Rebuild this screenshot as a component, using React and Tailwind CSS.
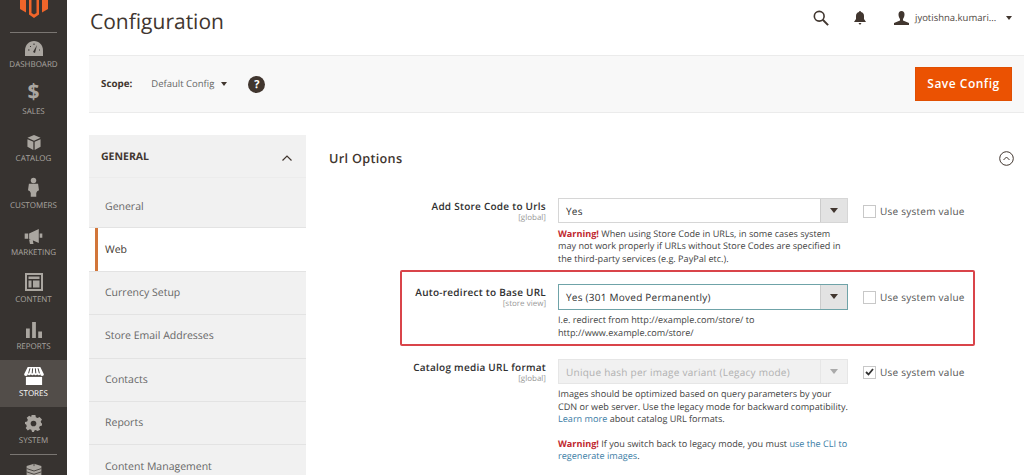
import React from 'react';

const Logo = () => (
  <svg width="28" height="18" viewBox="0 0 28 18" className="block">
    <path d="M0 0h6v12.500L0 9zM9 0h2.500v13l2.500 1.500 2.500-1.500V0H19v14.500L14 18l-5-3.500zM22 0h6v9l-6 3.500z" fill="#f0652a" />
  </svg>
);

const icons = {
  dashboard: (
    <svg width="18" height="15" viewBox="0 0 18 15">
      <path d="M9 0C4 0 0 4 0 9.500V15h18V9.500C18 4 14 0 9 0z" fill="#aaa6a0" />
      <path d="M8 11l4-7 -2 8z" fill="#373330" />
      <path d="M3 9h1.500M5 5l1 1M9 2.500V4M14 9h1" stroke="#373330" strokeWidth="1" />
    </svg>
  ),
  catalog: (
    <svg width="16" height="15" viewBox="0 0 16 16">
      <path d="M8 0l7 3-7 3-7-3zM1 4.500l6.300 2.800V16L1 12.500zM15 4.500L8.700 7.300V16l6.300-3.500z" fill="#aaa6a0" />
    </svg>
  ),
  customers: (
    <svg width="11" height="20" viewBox="0 0 12 21">
      <circle cx="6" cy="3.500" r="3" fill="#aaa6a0" />
      <path d="M1 7h10l1 7-2 1-1 2v4H3v-4l-1-2-2-1z" fill="#aaa6a0" />
    </svg>
  ),
  marketing: (
    <svg width="19" height="15" viewBox="0 0 20 17">
      <path d="M0 5h4v6H0zM5 5l11-5v16L5 11zM17 5h3v5h-3zM5 12h4l1 5H6z" fill="#aaa6a0" />
    </svg>
  ),
  content: (
    <svg width="18" height="18" viewBox="0 0 18 18">
      <path d="M0 0h18v18H0zM2 2v14h14V2zM3.500 3.500h11v2.500h-11zM3.500 7.500h3v7h-3zM8 7.500h6.500v7H8z" fill="#aaa6a0" fillRule="evenodd" />
    </svg>
  ),
  reports: (
    <svg width="16" height="16" viewBox="0 0 17 17">
      <path d="M0 7h4v10H0zM6.500 0h4v17h-4zM13 10h4v7h-4z" fill="#aaa6a0" />
    </svg>
  ),
  stores: (
    <svg width="22" height="18" viewBox="0 0 22 20">
      <path d="M4 0h14l4 8a2 2 0 0 1-4 0 2 2 0 0 1-3.500 0 2 2 0 0 1-3.500 0 2 2 0 0 1-3.500 0A2 2 0 0 1 4 8a2 2 0 0 1-4 0z" fill="#fff" />
      <path d="M6.500 1.500L5 7M9.500 1.500L9 7M12.500 1.500L13 7M15.500 1.500L17 7" stroke="#373330" strokeWidth="1" />
      <path d="M2 11h18v9H2z" fill="#fff" />
    </svg>
  ),
  system: (
    <svg width="17" height="17" viewBox="0 0 18 18">
      <path d="M7 0h4l.5 2.500 1.800.8L15.400 2l2.600 2.800-1.400 2 .6 1.700 .8.500v2l-2.400.8-.7 1.600 1.200 2.200L13.300 17l-2-1.200-1.300.5L9.500 18h-2l-.8-2.300-1.600-.5-2.200 1.200L.7 13.800l1.200-2-.7-1.800L0 9.500v-2l2.300-.6.700-1.800L1.800 3 4.500 .8l2 1.300z" fill="#aaa6a0" />
      <circle cx="9" cy="9" r="3" fill="#373330" />
    </svg>
  ),
  partners: (
    <svg width="18" height="16" viewBox="0 0 22 18">
      <path d="M11 0l9 3v12l-9 3-9-3V3z" fill="#aaa6a0" />
      <path d="M2 6l9 3 9-3M2 10l9 3 9-3M11 0v3" stroke="#373330" strokeWidth="1" fill="none" />
    </svg>
  ),
};

const navItems = [
  { label: 'DASHBOARD', icon: icons.dashboard },
  { label: 'SALES', icon: <span className="text-[21px] leading-[21px] font-bold text-[#aaa6a0]">$</span> },
  { label: 'CATALOG', icon: icons.catalog },
  { label: 'CUSTOMERS', icon: icons.customers },
  { label: 'MARKETING', icon: icons.marketing },
  { label: 'CONTENT', icon: icons.content },
  { label: 'REPORTS', icon: icons.reports },
  { label: 'STORES', icon: icons.stores, active: true },
  { label: 'SYSTEM', icon: icons.system },
];

const menu = ['General', 'Web', 'Currency Setup', 'Store Email Addresses', 'Contacts', 'Reports', 'Content Management'];

const Sidebar = () => (
  <aside className="w-[67px] shrink-0 h-full bg-[#373330] flex flex-col overflow-hidden">
    <div className="h-[33px] shrink-0 mx-[10px] border-b border-[#7a7672] flex justify-center items-start">
      <Logo />
    </div>
    <div className="flex flex-col -mt-[2px]">
      {navItems.map(item => (
        <div
          key={item.label}
          className={`h-[47px] shrink-0 flex flex-col items-center ${item.active ? 'bg-[#524d49]' : ''}`}
        >
          <div className="h-[28px] flex items-end justify-center pb-[3px]">{item.icon}</div>
          <span className={`text-[8px] leading-[12px] ${item.active ? 'text-white' : 'text-[#aaa6a0]'}`}>{item.label}</span>
        </div>
      ))}
    </div>
    <div className="mx-[10px] h-[9px] shrink-0 border-t border-[#7a7672]" />
    <div className="flex justify-center">{icons.partners}</div>
  </aside>
);

const Select = ({ value, focus, disabled }) => (
  <div
    className={`${focus ? 'h-[26px] border-[#6fa3a8]' : 'h-[25px]'} w-[290px] flex border ${disabled ? 'bg-[#f1f1f1] border-[#e6e6e6]' : 'bg-white'} ${!focus && !disabled ? 'border-[#d6d6d6]' : ''}`}
  >
    <span className={`flex-1 px-[7px] text-[10px] leading-[24px] tracking-[0.25px] whitespace-nowrap ${disabled ? 'text-[#b0b0b0]' : 'text-[#303030]'}`}>{value}</span>
    <span className={`w-[27px] flex items-center justify-center border-l ${disabled ? 'bg-[#f1f1f1] border-[#e6e6e6]' : 'bg-[#e3e3e3] border-[#cccccc]'}`}>
      <span className={`w-0 h-0 border-x-[4px] border-x-transparent border-t-[5px] ${disabled ? 'border-t-[#aaaaaa]' : 'border-t-[#41362f]'}`} />
    </span>
  </div>
);

const UseSystem = ({ checked }) => (
  <label className="flex items-center gap-[4px] h-[26px] pt-[1px] ml-[15px] text-[10px] tracking-[0.25px] whitespace-nowrap text-[#555555]">
    <span className="w-[13px] h-[13px] border border-[#c8c8c8] bg-white flex items-center justify-center">
      {checked && (
        <svg width="9" height="8" viewBox="0 0 9 8"><path d="M1 4l2.500 2.500L8 1" stroke="#333" strokeWidth="1.800" fill="none" /></svg>
      )}
    </span>
    Use system value
  </label>
);

const FormRow = ({ label, scope, children, select, checked }) => (
  <div className="flex">
    <div className="w-[146px] shrink-0 text-right pt-[1px]">
      <div className="text-[10px] leading-[14px] font-semibold tracking-[0.25px] text-[#303030] whitespace-nowrap">{label}</div>
      <div className="text-[8px] leading-[10px] text-[#999999]">{scope}</div>
    </div>
    <div className="ml-[12px] w-[290px] shrink-0">
      {select}
      <div className="mt-[4.500px] w-[292px] text-[9.100px] leading-[12.500px] text-[#444444]">{children}</div>
    </div>
    <UseSystem checked={checked} />
  </div>
);

const Warning = () => <b className="font-bold text-[#c0272d]">Warning!</b>;

export default function App() {
  return (
    <div className="w-[1024px] h-[475px] flex overflow-hidden bg-white font-['Open_Sans',sans-serif] [text-rendering:geometricPrecision]">
      <Sidebar />
      <main className="flex-1 min-w-0 flex flex-col pl-[22px]">
        <header className="h-[55px] shrink-0 flex items-start justify-between">
          <h1 className="ml-[1px] mt-[6px] text-[21px] leading-[32px] text-[#41362f]">Configuration</h1>
          <div className="flex items-center mt-[10px] text-[#41362f]">
            <svg width="16" height="16" viewBox="0 0 18 18" fill="none" stroke="#41362f" strokeWidth="1.800">
              <circle cx="7" cy="7" r="5.500" />
              <path d="M11 11l6 6" strokeWidth="2.200" />
            </svg>
            <svg className="ml-[25px]" width="12" height="14" viewBox="0 0 12 14" fill="#41362f">
              <path d="M6 0a1 1 0 0 1 1 1c2 .5 3 2 3 4v3l2 3H0l2-3V5c0-2 1-3.500 3-4a1 1 0 0 1 1-1zM4.500 12h3L6 14z" />
            </svg>
            <svg className="ml-[28px]" width="15" height="14" viewBox="0 0 15 14" fill="#41362f">
              <path d="M7.500 0c2 0 3 1.500 3 3.500S9.500 7 9 8v1.500l6 2.500v2H0v-2l6-2.500V8C5.500 7 4.500 5.500 4.500 3.500S5.500 0 7.500 0z" />
            </svg>
            <span className="ml-[6px] text-[9.500px] text-[#514943] w-[85px] whitespace-nowrap">jyotishna.kumari...</span>
            <span className="ml-[6px] mr-[12px] w-0 h-0 border-x-[3px] border-x-transparent border-t-[4px] border-t-[#41362f]" />
          </div>
        </header>

        <section className="h-[58px] shrink-0 bg-[#f8f8f8] border-y border-[#ebebeb] flex items-center pl-[12px] pr-[12px]">
          <span className="text-[9.800px] font-bold text-[#41362f]">Scope:</span>
          <span className="ml-[19px] text-[9.500px] text-[#666666]">Default Config</span>
          <span className="ml-[7px] w-0 h-0 border-x-[3px] border-x-transparent border-t-[4px] border-t-[#41362f]" />
          <span className="ml-[21px] w-[17px] h-[17px] rounded-full bg-[#41362f] text-white text-[11px] leading-[17px] font-bold text-center">?</span>
          <button className="ml-auto w-[97px] h-[34px] bg-[#eb5202] border border-[#e04f02] text-white text-[12px] font-semibold tracking-[0.5px]">Save Config</button>
        </section>

        <div className="flex flex-1 min-h-0 pt-[22px]">
          <nav className="w-[217px] shrink-0">
            <div className="h-[43px] pt-[3px] bg-[#f1f1f1] border-b border-[#ececec] flex items-center justify-between pl-[12px] pr-[14px]">
              <span className="text-[10.500px] font-bold text-[#41362f]">GENERAL</span>
              <svg width="10" height="6" viewBox="0 0 10 6" fill="none" stroke="#41362f" strokeWidth="1.200"><path d="M.5 5.500L5 1l4.500 4.500" /></svg>
            </div>
            {menu.map((name, i) => (
              <div
                key={name}
                className={`relative pl-[16px] flex items-center text-[10.500px] border-b border-[#e3e3e3] ${i === 0 ? 'h-[50.400px] pt-[10px]' : 'h-[43.400px] pt-[2px]'} ${name === 'Web' ? 'bg-white font-medium text-[#41362f]' : 'bg-[#f1f1f1] text-[#666666]'}`}
              >
                {name === 'Web' && <span className="absolute left-[6px] top-0 bottom-0 w-[3px] bg-[#d2763a]" />}
                {name}
              </div>
            ))}
          </nav>

          <div className="flex-1 min-w-0 pl-[23px]">
            <div className="flex items-center justify-between h-[46px] pr-[10px] pt-[1px]">
              <h2 className="text-[12.700px] font-semibold tracking-[0.3px] text-[#41362f]">Url Options</h2>
              <svg width="15" height="15" viewBox="0 0 15 15" fill="none" stroke="#41362f" strokeWidth="1">
                <circle cx="7.500" cy="7.500" r="6.800" />
                <path d="M4.500 9l3-3 3 3" />
              </svg>
            </div>
            <div className="pt-[17px] pl-[71px] flex flex-col">
              <FormRow label="Add Store Code to Urls" scope="[global]" select={<Select value="Yes" />}>
                <Warning /> When using Store Code in URLs, in some cases system may not work properly if URLs without Store Codes are specified in the third-party services (e.g. PayPal etc.).
              </FormRow>
              <div className="mr-[49px] mt-[4.500px] h-[76px] pt-[12px] border-[2px] border-[#d9444a] rounded-[2px]">
                <div className="-ml-[2px]">
                  <FormRow label="Auto-redirect to Base URL" scope="[store view]" select={<Select value="Yes (301 Moved Permanently)" focus />}>
                    I.e. redirect from http://example.com/store/ to http://www.example.com/store/
                  </FormRow>
                </div>
              </div>
              <div className="mt-[13px]">
                <FormRow label="Catalog media URL format" scope="[global]" checked select={<Select value="Unique hash per image variant (Legacy mode)" disabled />}>
                  Images should be optimized based on query parameters by your CDN or web server. Use the legacy mode for backward compatibility. <span className="text-[#3a7ca5]">Learn more</span> about catalog URL formats.
                  <div className="mt-[12px]">
                    <Warning /> If you switch back to legacy mode, you must <span className="text-[#3a7ca5]">use the CLI to regenerate images</span>.
                  </div>
                </FormRow>
              </div>
            </div>
          </div>
        </div>
      </main>
    </div>
  );
}
